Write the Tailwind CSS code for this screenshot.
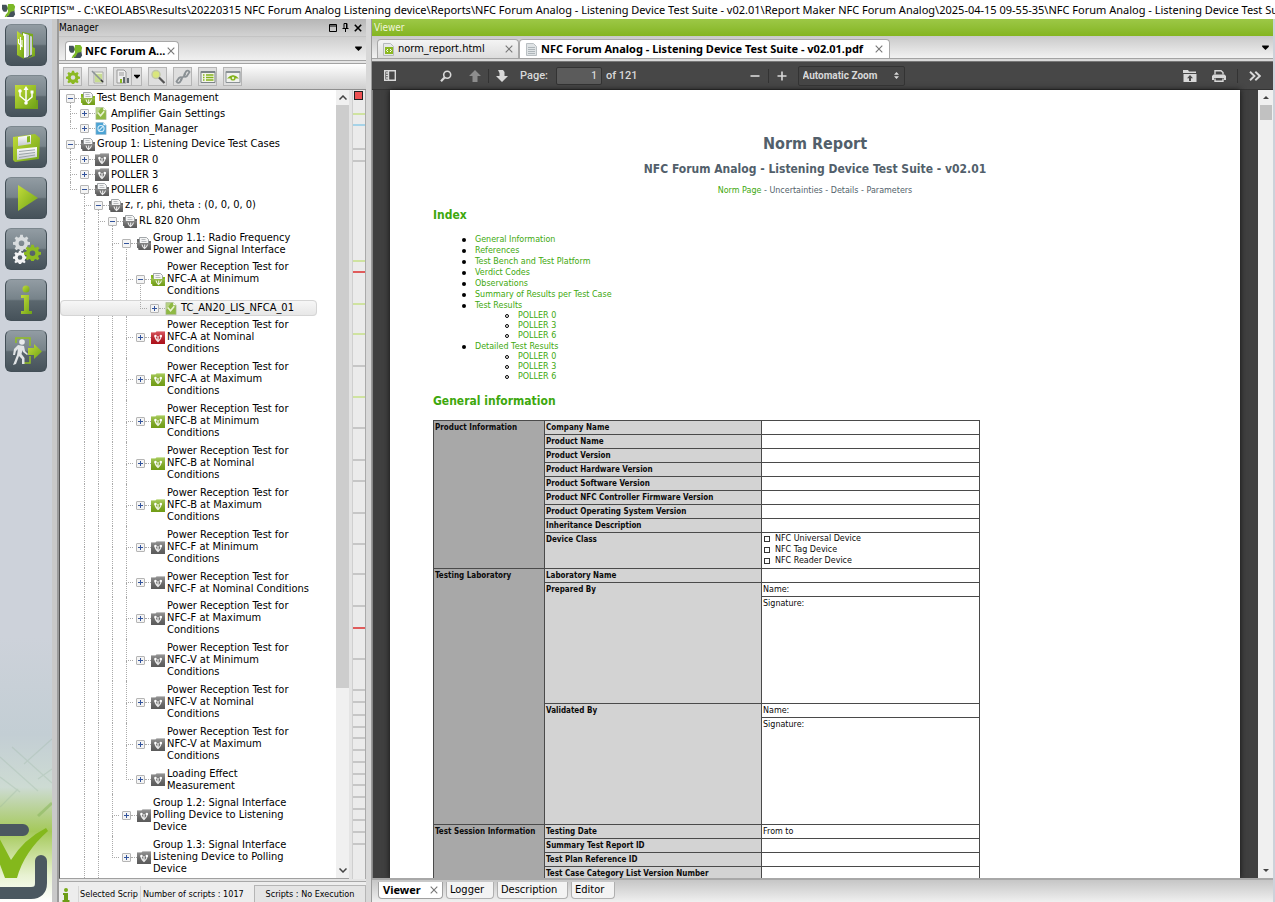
<!DOCTYPE html>
<html lang="en">

<head>
    <meta charset="UTF-8">
    <meta name="viewport" content="width=device-width, initial-scale=1.0">
    <title>SCRIPTIS</title>
    <script src="https://cdn.jsdelivr.net/npm/@tailwindcss/browser@4"></script>
</head>

<body class="h-screen flex flex-col overflow-hidden bg-[#cdd2da] text-black text-[11px] leading-3 font-['DejaVu_Sans_Condensed','DejaVu_Sans',sans-serif]">

    <!-- shared icons -->
    <svg class="absolute size-0" aria-hidden="true">
        <defs>
            <linearGradient id="lime" x1="0" y1="0" x2="1" y2="1">
                <stop offset="0" stop-color="#c3dc3a" />
                <stop offset="1" stop-color="#6fa317" />
            </linearGradient>
            <linearGradient id="silver" x1="0" y1="0" x2="0" y2="1">
                <stop offset="0" stop-color="#ffffff" />
                <stop offset="1" stop-color="#c4c9cc" />
            </linearGradient>
            <linearGradient id="shade" x1="0" y1="0" x2="0" y2="1">
                <stop offset="0" stop-color="#ffffff" stop-opacity=".3" />
                <stop offset="1" stop-color="#000000" stop-opacity=".15" />
            </linearGradient>
        </defs>
        <symbol id="logo" viewBox="0 0 16 16">
            <path d="M0 2h5l2 4-2 4H2Q0 9 0 6z" fill="#44525a" />
            <path d="M8 9l6-1 1 5-2 3H6l-1-2z" fill="#44525a" />
            <path d="M7 1h6l2 3-1 5-4 1-3 5-2-1 2-5-1-3z" fill="#7cb928" />
            <path d="M3 16l2-4 2 1-2 3z" fill="#7cb928" />
        </symbol>
        <symbol id="folder" viewBox="0 0 14 13">
            <path d="M0 1.500h4.500l1-1H14V13H0z" fill="currentColor" />
            <path d="M0 1.500h4.500l1-1H14V13H0z" fill="url(#shade)" />
            <path d="M4 4.500Q4 8 7 10.500 10 8 10.500 4.500M7 5v6" fill="none" stroke="#fff" stroke-opacity=".85" stroke-width="1.300" />
            <circle cx="4.500" cy="5" r="1.200" fill="#fff" />
            <circle cx="9.800" cy="5" r="1.200" fill="#fff" />
        </symbol>
        <symbol id="folder-open" viewBox="0 0 14 13">
            <path d="M0 2h3v9H0zM11 4h3v9h-3z" fill="currentColor" />
            <path d="M2.500 .5h7l2 2V8h-9z" fill="#f4f5f5" stroke="#8d9296" stroke-width=".8" />
            <path d="M4.500 2.500h4M4.500 4.500h5" stroke="#b2b6b9" stroke-width=".9" />
            <path d="M0 4.500l3 1.500h11v7H1.500z" fill="currentColor" />
            <path d="M0 4.500l3 1.500h11v7H1.500z" fill="url(#shade)" />
            <path d="M5 7.500Q5.500 10 7.500 11.500 10 10 10.500 7.500M7.700 7.500V12" fill="none" stroke="#fff" stroke-opacity=".85" stroke-width="1.200" />
        </symbol>
        <symbol id="script-ok" viewBox="0 0 12 14">
            <path d="M.5 .5h8l3 3v10H.5z" fill="#8fb944" stroke="#a9b79a" stroke-width=".6" />
            <path d="M8.500 .5l3 3h-3z" fill="#fff" />
            <path d="M2 .8h4L.8 9V.8z" fill="#fff" fill-opacity=".35" />
            <path d="M2.500 6l3 3.500 4-5" fill="none" stroke="#e9f3d2" stroke-width="1.700" />
        </symbol>
        <symbol id="script-none" viewBox="0 0 12 14">
            <path d="M.5 .5h8l3 3v10H.5z" fill="#4ba3d4" stroke="#9db8c8" stroke-width=".6" />
            <path d="M8.500 .5l3 3h-3z" fill="#fff" />
            <circle cx="6" cy="7" r="3.300" fill="none" stroke="#d5ecf9" stroke-width="1.200" />
            <path d="M3.500 9.500l5-5" stroke="#d5ecf9" stroke-width="1.200" />
        </symbol>
        <symbol id="gear" viewBox="0 0 20 20">
            <path d="M8.500 1h3l.5 2.600 1.900.8L16 2.800 18.100 5l-1.500 2.100.8 1.900 2.600.5v3l-2.600.5-.8 1.900 1.500 2.100-2.100 2.100-2.100-1.500-1.900.8-.5 2.600h-3l-.5-2.600-1.900-.8L4 19.100 1.900 17l1.500-2.100-.8-1.900L0 12.500v-3L2.600 9l.8-1.900L1.900 5 4 2.900l2.100 1.500L8 3.600zM10 7.500a3.300 3.300 0 1 0 0 6.600 3.300 3.300 0 0 0 0-6.600z" fill="currentColor" fill-rule="evenodd" />
        </symbol>
        <symbol id="close" viewBox="0 0 8 8">
            <path d="M.7 .7l6.600 6.600M7.300 .7L.7 7.300" fill="none" stroke="currentColor" stroke-width="1.100" />
        </symbol>
        <symbol id="down" viewBox="0 0 8 6">
            <path d="M0 .5h8v1.500L4 6 0 2z" fill="currentColor" />
        </symbol>
    </svg>

    <header class="h-[19px] shrink-0 bg-white flex items-center gap-[4px] pl-[2px] overflow-hidden">
        <svg class="size-[14px] shrink-0"><use href="#logo" /></svg>
        <h1 class="font-['Noto_Sans',sans-serif] whitespace-nowrap leading-[18px]">SCRIPTIS™ - C:\KEOLABS\Results\20220315 NFC Forum Analog Listening device\Reports\NFC Forum Analog - Listening Device Test Suite - v02.01\Report Maker NFC Forum Analog\2025-04-15 09-55-35\NFC Forum Analog - Listening Device Test Sui</h1>
    </header>

    <div class="flex-1 min-h-0 flex">

        <!-- launcher -->
        <nav class="w-[52px] shrink-0 relative overflow-hidden flex flex-col items-center gap-[9px] pt-[5px] bg-[linear-gradient(#cdd2da_0%,#cdd2da_70%,#c3ced4_81%,#cddbd3_87%,#a5c95a_92%,#e8f2d2_97%,#ffffff_100%)]">
            <button aria-label="Open project" class="size-[42px] shrink-0 rounded-md border border-[#434f57] border-t-[#7c878e] bg-[linear-gradient(#929ca3_0%,#77838a_48%,#5b676e_52%,#46525a_100%)] flex items-center justify-center">
                <svg class="size-8" viewBox="0 0 32 32">
                    <path d="M12 3l11 2v20l-11 4z" fill="#7aa91c" />
                    <path d="M13 4l5 2v22l-5 1z" fill="#fff" />
                    <path d="M16 5l3 1v21l-3 1zM20 7l2 .5v18l-2 1z" fill="#c9ced1" />
                    <path d="M22 8v10l3 1v8l-9 3 6-3z" fill="url(#lime)" />
                    <path d="M7 2l7 5v23l-7-4z" fill="url(#lime)" />
                    <path d="M8.500 10v4l4 4M12 11v6M10.500 8v13" fill="none" stroke="#fff" stroke-width="1.100" />
                </svg>
            </button>
            <button aria-label="Devices" class="size-[42px] shrink-0 rounded-md border border-[#434f57] border-t-[#7c878e] bg-[linear-gradient(#929ca3_0%,#77838a_48%,#5b676e_52%,#46525a_100%)] flex items-center justify-center">
                <svg class="size-8" viewBox="0 0 32 32">
                    <path d="M5 6h21v14h2v9H5z" fill="#74a21b" />
                    <path d="M5 5h21v23H5z" fill="url(#lime)" />
                    <path d="M10 11v5l6 5M22 12v5l-6 5M16 9v13" fill="none" stroke="#fff" stroke-width="1.500" />
                    <path d="M16 6l2.500 4h-5z" fill="#fff" />
                    <circle cx="10" cy="11" r="1.800" fill="#fff" />
                    <circle cx="16" cy="23" r="1.800" fill="#fff" />
                    <path d="M20.500 10.500h3v3h-3z" fill="#fff" />
                </svg>
            </button>
            <button aria-label="Save" class="size-[42px] shrink-0 rounded-md border border-[#434f57] border-t-[#7c878e] bg-[linear-gradient(#929ca3_0%,#77838a_48%,#5b676e_52%,#46525a_100%)] flex items-center justify-center">
                <svg class="size-8" viewBox="0 0 32 32">
                    <path d="M3 6l22-3 5 4-1 21-24 3-2-2z" fill="url(#lime)" />
                    <path d="M8 6l13-2v9L8 15z" fill="url(#silver)" />
                    <path d="M17 5.500l3-.5v6l-3 .5z" fill="#84b520" />
                    <path d="M7 18l20-2v10L7 29z" fill="url(#silver)" />
                    <path d="M9 20.500l16-1.700M9 23.500l16-2M9 26.500l16-2.500" stroke="#9aa3a8" />
                </svg>
            </button>
            <button aria-label="Run" class="size-[42px] shrink-0 rounded-md border border-[#434f57] border-t-[#7c878e] bg-[linear-gradient(#929ca3_0%,#77838a_48%,#5b676e_52%,#46525a_100%)] flex items-center justify-center">
                <svg class="size-8" viewBox="0 0 32 32">
                    <path d="M8 3l20 13L8 29z" fill="url(#lime)" />
                </svg>
            </button>
            <button aria-label="Settings" class="size-[42px] shrink-0 rounded-md border border-[#434f57] border-t-[#7c878e] bg-[linear-gradient(#929ca3_0%,#77838a_48%,#5b676e_52%,#46525a_100%)] flex items-center justify-center">
                <svg class="size-8" viewBox="0 0 32 32">
                    <use href="#gear" x="3" y="1" width="17" height="17" class="text-[#d8dcde]" />
                    <use href="#gear" x="3" y="17" width="14" height="14" class="text-[#f2f3f4]" />
                    <use href="#gear" x="14" y="11" width="17" height="17" class="text-[#8dbb22]" />
                </svg>
            </button>
            <button aria-label="Information" class="size-[42px] shrink-0 rounded-md border border-[#434f57] border-t-[#7c878e] bg-[linear-gradient(#929ca3_0%,#77838a_48%,#5b676e_52%,#46525a_100%)] flex items-center justify-center">
                <svg class="size-8" viewBox="0 0 32 32">
                    <circle cx="16" cy="5" r="3.500" fill="url(#lime)" />
                    <path d="M11 11h8v16h3v3H11v-3h3V14h-3z" fill="url(#lime)" />
                </svg>
            </button>
            <button aria-label="Exit" class="size-[42px] shrink-0 rounded-md border border-[#434f57] border-t-[#7c878e] bg-[linear-gradient(#929ca3_0%,#77838a_48%,#5b676e_52%,#46525a_100%)] flex items-center justify-center">
                <svg class="size-8" viewBox="0 0 32 32">
                    <path d="M6 8V3h14v8M20 21v7h-6" fill="none" stroke="#93c023" stroke-width="1.500" />
                    <path d="M18 13h6V9l8 7.500-8 7.500v-4h-6z" fill="url(#lime)" />
                    <circle cx="12" cy="7" r="2.800" fill="#e8eaeb" />
                    <path d="M8 10l6 1 1 5 3 3-1 1-4-3-.5-2-1 4 3 4v6h-2.500v-5L9 21l-3 8-3 1 4-10 1-6-2 2-1 4H3l1-6z" fill="#e1e4e6" />
                </svg>
            </button>
            <svg class="absolute bottom-0 left-0 w-[52px] h-[185px]" viewBox="0 0 52 185">
                <path d="M12 30l40 36M0 40l38 34M52 52L38 62M52 22L24 47M18 72L0 90M0 60l20 15" fill="none" stroke="#8fae96" stroke-opacity=".25" stroke-width="1.200" />
                <path d="M52 86L38 99" stroke="#8cb860" stroke-opacity=".6" stroke-width="3" />
                <path d="M-10 113h33M41 144v22q0 10-10 10H-10" fill="none" stroke="#4b5860" stroke-width="12" stroke-linecap="round" />
                <path d="M-8 126l5-9 14 26Q24 122 46 111l2 3Q24 135 17 161H5z" fill="#84b81c" />
            </svg>
        </nav>
        <div class="w-[7px] shrink-0 bg-[#c9c9c9] border-r-2 border-[#9b9b9b]"></div>

        <!-- manager -->
        <section class="w-[307px] shrink-0 flex flex-col bg-[#e4e4e4]">
            <div class="h-[17px] shrink-0 flex items-center gap-[5px] pr-1 bg-linear-to-b from-[#b6b6b6] to-[#d2d2d2]">
                <h2 class="flex-1 text-[10px]">Manager</h2>
                <button aria-label="Maximize"><svg class="size-2" viewBox="0 0 8 8"><path d="M.5 .5h7v7h-7zM0 2h8" fill="none" stroke="#000" /></svg></button>
                <button aria-label="Pin"><svg class="w-[7px] h-[9px]" viewBox="0 0 7 9"><path d="M2 .5h3v5H2zM4.500 0v6M.5 5.500h6M3.500 6v3" fill="none" stroke="#000" /></svg></button>
                <button aria-label="Close manager"><svg class="size-2" viewBox="0 0 8 8"><path d="M.8 .8l6.400 6.400M7.200 .8L.8 7.200" stroke="#000" stroke-width="1.600" /></svg></button>
            </div>
            <div class="h-[25px] shrink-0 flex items-end justify-between pl-[6px] pr-1 border-t border-b border-t-[#c4c4c4] border-b-[#a3a3a3] bg-linear-to-b from-[#cfcfcf] to-[#f0f0f0]">
                <div class="h-[19px] flex items-center gap-[2px] px-[3px] bg-white border border-b-0 border-[#a8a8a8] rounded-t-sm">
                    <svg class="size-[14px]"><use href="#logo" /></svg>
                    <button class="font-bold text-[11px] font-['Noto_Sans',sans-serif]">NFC Forum A...</button>
                    <button aria-label="Close tab" class="text-[#777]"><svg class="size-2"><use href="#close" /></svg></button>
                </div>
                <button aria-label="Tab list" class="self-center"><svg class="w-[7px] h-[5px]"><use href="#down" /></svg></button>
            </div>
            <div class="h-[26px] shrink-0 mt-[2px] flex items-center gap-[6px] pl-1 border-t border-[#a3a3a3] bg-linear-to-b from-white to-[#cfcfcf]">
                <button aria-label="Options" class="size-[19px] border border-[#b5b5b5] bg-[#dedede] flex items-center justify-center text-[#8cb923]"><svg class="size-[14px]"><use href="#gear" /></svg></button>
                <button aria-label="Edit" class="size-[19px] border border-[#b5b5b5] bg-[#dedede] flex items-center justify-center">
                    <svg class="size-4" viewBox="0 0 16 16"><path d="M4 3h9v11H4z" fill="#e9f0d4" stroke="#aaa" /><path d="M5 6h7M5 8h7M5 10h7M5 12h7" stroke="#a6c94f" /><path d="M2 2l10 10" stroke="#8b9297" stroke-width="1.600" /><path d="M11 11l2 2" stroke="#333" stroke-width="1.600" /></svg>
                </button>
                <div class="flex">
                    <button aria-label="Reports" class="size-[19px] border border-[#b5b5b5] bg-[#dedede] flex items-center justify-center">
                        <svg class="size-4" viewBox="0 0 16 16"><path d="M2 1h7l2 2v11H2z" fill="#eee" stroke="#999" /><path d="M4 4h5M4 6h5" stroke="#999" /><path d="M5 14v-4h2v4z" fill="#8cb923" /><path d="M8 14V8h2v6zM12 14V9h2v5z" fill="#60686d" /></svg>
                    </button>
                    <button aria-label="Report menu" class="w-[10px] h-[19px] border border-l-0 border-[#b5b5b5] bg-[#dedede] flex items-center justify-center"><svg class="w-[6px] h-[5px]"><use href="#down" /></svg></button>
                </div>
                <button aria-label="Search" class="size-[19px] border border-[#b5b5b5] bg-[#dedede] flex items-center justify-center">
                    <svg class="size-4" viewBox="0 0 16 16"><circle cx="6" cy="5.500" r="4" fill="#d9e67c" stroke="#c0c7a8" stroke-width="1.500" /><path d="M9 8.500l5.500 5.500" stroke="#555" stroke-width="2.200" /></svg>
                </button>
                <button aria-label="Link" class="size-[19px] border border-[#b5b5b5] bg-[#dedede] flex items-center justify-center">
                    <svg class="size-4" viewBox="0 0 16 16" fill="none" stroke="#8a9094" stroke-width="1.800"><path d="M7 10L5 13Q3 15 1.500 12.500L4 9Q6 7.500 7.500 9" /><path d="M9 6l2-3.500Q13 .5 14.500 3L12 7Q10 8.500 8.500 7" /><path d="M5.500 11l5-6" /></svg>
                </button>
                <button aria-label="List" class="size-[19px] border border-[#b5b5b5] bg-[#dedede] flex items-center justify-center">
                    <svg class="size-4" viewBox="0 0 16 16"><path d="M1 2.500h14v11H1z" fill="#f4f6ea" stroke="#7b8387" /><path d="M1 3h14" stroke="#7b8387" stroke-width="2" /><path d="M3 6h1.500M6 6h7.500M3 8.500h1.500M6 8.500h7.500M3 11h1.500M6 11h7.500" stroke="#84b31c" stroke-width="1.500" /></svg>
                </button>
                <button aria-label="Preview" class="size-[19px] border border-[#b5b5b5] bg-[#dedede] flex items-center justify-center">
                    <svg class="size-4" viewBox="0 0 16 16"><path d="M1 2.500h14v11H1z" fill="#f1f2ee" stroke="#8b9296" /><path d="M1 3h14" stroke="#8b9296" stroke-width="2" /><path d="M2 9.500Q8 3 14 9.500 8 9 2 9.500z" fill="#84b31c" /><circle cx="8" cy="9" r="2.600" fill="#84b31c" /><circle cx="8" cy="9" r="1.200" fill="#e8f2d0" /></svg>
                </button>
            </div>

            <div class="flex-1 min-h-0 flex border-t border-[#8f8f8f] pb-[2px]">
                <div class="flex-1 min-w-0 flex bg-white border-l border-[#555] border-b border-b-[#a0a0a0]">
                    <div id="tree" class="flex-1 min-w-0 overflow-hidden"></div>
                    <div class="w-[13px] shrink-0 flex flex-col items-center justify-between bg-[#f0f0f0]">
                        <button aria-label="Scroll up" class="h-[15px]"><svg class="w-2 h-[5px]" viewBox="0 0 8 5"><path d="M.5 4.500L4 1l3.500 3.500" fill="none" stroke="#444" stroke-width="1.500" /></svg></button>
                        <div class="w-full flex-1 bg-[#cdcdcd]"></div>
                        <div class="w-full basis-[174px]"></div>
                        <button aria-label="Scroll down" class="h-[16px]"><svg class="w-2 h-[5px]" viewBox="0 0 8 5"><path d="M.5 .5L4 4 7.500 .5" fill="none" stroke="#444" stroke-width="1.500" /></svg></button>
                    </div>
                </div>
                <div id="marks" class="w-[13px] ml-[3px] shrink-0 relative bg-[#ebebeb] border-l border-[#cfcfcf]">
                    <div class="absolute top-[1px] left-[1px] size-[9px] bg-[#ee5253] border border-[#222]"></div>
                </div>
                <div class="w-[1px] shrink-0 bg-[#aaa]"></div>
            </div>

            <footer class="h-[21px] shrink-0 flex items-end bg-[#ededed] border-t border-[#a8a8a8] text-[9px] leading-[16px] whitespace-nowrap">
                <svg class="w-2 h-[14px] ml-[3px] mr-2" viewBox="0 0 8 14"><circle cx="4" cy="2" r="2" fill="#79ab1a" /><path d="M1 5h5v7h1.500v2h-7v-2H2V7H1z" fill="#6c9c17" /></svg>
                <div class="w-[62px] pl-px border-l border-[#d6d6d6]">Selected Scrip</div>
                <div class="w-[114px] pl-[2px] border-l border-[#d6d6d6]">Number of scripts : 1017</div>
                <div class="flex-1 h-[17px] text-center bg-[#e4e4e4] border border-b-0 border-[#b5b5b5]">Scripts : No Execution</div>
            </footer>
        </section>
        <div class="w-[6px] shrink-0 bg-[#d8d8d8] border-r border-[#9b9b9b]"></div>

        <!-- viewer -->
        <section class="flex-1 min-w-0 flex flex-col bg-[#d9d9d9] mr-[2px]">
            <div class="h-[17px] shrink-0 flex items-center bg-linear-to-b from-[#9dc846] to-[#84b51f]">
                <h2 class="pl-[2px] text-[10px] text-[#f0f5dc]">Viewer</h2>
            </div>
            <div class="h-[23px] shrink-0 flex items-end pl-[5px] pr-1 border-b border-[#a3a3a3] bg-linear-to-b from-[#c9c9c9] to-[#f2f2f2]">
                <div class="w-[142px] h-[19px] flex items-center gap-[4px] px-[5px] bg-linear-to-b from-[#f4f4f4] to-[#dddddd] border border-b-0 border-[#a8a8a8] rounded-t-sm">
                    <svg class="w-[11px] h-[13px]" viewBox="0 0 11 13"><path d="M.5 .5h7l3 3v9H.5z" fill="#e6e8e8" stroke="#b5b9bb" /><path d="M2 4h8v7H2z" fill="#8cb923" /><path d="M5 6L3.500 7.500 5 9M7 6l1.500 1.500L7 9" fill="none" stroke="#fff" /></svg>
                    <button class="flex-1 text-left">norm_report.html</button>
                    <button aria-label="Close norm_report.html" class="text-[#777]"><svg class="size-2"><use href="#close" /></svg></button>
                </div>
                <div class="h-[19px] flex items-center gap-[4px] px-[6px] bg-white border border-b-0 border-[#a8a8a8] rounded-t-sm">
                    <svg class="w-[11px] h-[13px]" viewBox="0 0 11 13"><path d="M.5 .5h7l3 3v9H.5z" fill="#dfe3e5" stroke="#b9bfc2" /><path d="M2 4.500h7M2 6.500h7M2 8.500h7M2 10.500h7" stroke="#aeb6ba" /></svg>
                    <button class="font-bold font-['Noto_Sans',sans-serif] whitespace-nowrap mr-2">NFC Forum Analog - Listening Device Test Suite - v02.01.pdf</button>
                    <button aria-label="Close pdf" class="text-[#777]"><svg class="size-2"><use href="#close" /></svg></button>
                </div>
                <button aria-label="Tab list" class="self-center ml-auto"><svg class="w-[7px] h-[5px]"><use href="#down" /></svg></button>
            </div>

            <div class="h-[29px] shrink-0 mt-[2px] flex items-center px-3 bg-[#474747] border-t border-[#777] border-b border-b-[#333] text-[#d9d9d9] font-['Roboto',sans-serif] text-[10px] font-medium">
                <button aria-label="Toggle sidebar"><svg class="w-3 h-[11px]" viewBox="0 0 12 11"><path d="M.7 .7h10.600v9.600H.7zM4.500 1v9M2 3h2M2 5.500h2M2 8h2" fill="none" stroke="currentColor" stroke-width="1.400" /></svg></button>
                <button aria-label="Find" class="ml-11"><svg class="size-3" viewBox="0 0 12 12"><circle cx="7.200" cy="4.700" r="3.500" fill="none" stroke="currentColor" stroke-width="1.600" /><path d="M4.800 7.300L1 11.200" stroke="currentColor" stroke-width="2.200" /></svg></button>
                <button aria-label="Previous page" class="ml-[17px] text-[#8d8d8d]"><svg class="size-3" viewBox="0 0 12 12"><path d="M6 0l6 6H8.500v6h-5V6H0z" fill="currentColor" /></svg></button>
                <div class="w-px h-[14px] mx-[7px] bg-[#333]"></div>
                <button aria-label="Next page"><svg class="size-3" viewBox="0 0 12 12"><path d="M2 0h5l1.500 2v4H12l-6 6-6-6h3.500V3z" fill="currentColor" /></svg></button>
                <label for="page" class="ml-3 text-[11px]">Page:</label>
                <input id="page" type="text" value="1" class="w-[46px] h-[18px] ml-2 px-1 text-right bg-[#5b5b5b] border border-[#333] rounded-xs">
                <span class="ml-1 text-[11px]">of 121</span>
                <button aria-label="Zoom out" class="ml-28"><svg class="w-[10px] h-[10px]" viewBox="0 0 10 10"><path d="M.5 5h9" stroke="currentColor" stroke-width="1.600" /></svg></button>
                <div class="w-px h-[14px] mx-2 bg-[#333]"></div>
                <button aria-label="Zoom in"><svg class="w-[10px] h-[10px]" viewBox="0 0 10 10"><path d="M.5 5h9M5 .5v9" stroke="currentColor" stroke-width="1.600" /></svg></button>
                <div class="relative ml-[11px] flex items-center">
                    <select aria-label="Zoom" class="w-[107px] h-[20px] pl-1 appearance-none bg-[#454545] border border-[#333] rounded-xs font-bold">
                        <option>Automatic Zoom</option>
                    </select>
                    <svg class="absolute right-[6px] w-[5px] h-[7px] pointer-events-none" viewBox="0 0 5 7"><path d="M2.500 0L5 2.700H0zM0 4.300h5L2.500 7z" fill="currentColor" /></svg>
                </div>
                <button aria-label="Open file" class="ml-auto"><svg class="w-[14px] h-3" viewBox="0 0 14 12"><path d="M0 0h5l1 1.500h7V3H0z" fill="currentColor" /><path d="M.5 4h13v8H.5zM7 5L4 8.200h2V11h2V8.200h2z" fill="currentColor" fill-rule="evenodd" /></svg></button>
                <button aria-label="Print" class="ml-[15px]"><svg class="w-[14px] h-3" viewBox="0 0 14 12"><path d="M3 4.500V.7h6l2 1.800v2M3 8.500v2.800h8V8.500" fill="none" stroke="currentColor" stroke-width="1.400" /><path d="M1.500 4.500h11L14 6v4h-2V8H2v2H0V6z" fill="currentColor" /></svg></button>
                <div class="w-px h-[14px] mx-[11px] bg-[#333]"></div>
                <button aria-label="Tools"><svg class="w-3 h-[10px]" viewBox="0 0 12 10"><path d="M1 .7L5.500 5 1 9.300M6.300 .7L10.800 5 6.300 9.300" fill="none" stroke="currentColor" stroke-width="1.900" /></svg></button>
            </div>

            <div class="flex-1 min-h-0 flex bg-[#404040] border-l border-[#888]">
                <div class="flex-1 min-w-0 ml-[17px] mr-[18px] overflow-hidden bg-white shadow-[0_0_6px_#111] pt-[44px] px-[43px] text-[#0a0a0a] font-['DejaVu_Sans',sans-serif] text-[8px]">
                    <div class="text-center text-[#525f6b]">
                        <h1 class="text-[16px] leading-[20px] font-bold font-['DejaVu_Sans_Condensed','DejaVu_Sans',sans-serif]">Norm Report</h1>
                        <h2 class="mt-2 text-[12px] leading-[14px] font-bold font-['DejaVu_Sans_Condensed','DejaVu_Sans',sans-serif]">NFC Forum Analog - Listening Device Test Suite - v02.01</h2>
                        <p class="mt-2 leading-[14px]"><a href="#" class="text-[#3ea80d]">Norm Page</a> - <a href="#">Uncertainties</a> - <a href="#">Details</a> - <a href="#">Parameters</a></p>
                    </div>
                    <h2 class="mt-[9px] text-[12px] leading-[16px] font-bold text-[#3ea80d] font-['DejaVu_Sans_Condensed','DejaVu_Sans',sans-serif]">Index</h2>
                    <ul id="index" class="mt-[11px] pl-[42px] leading-[11px]"></ul>
                    <h2 class="mt-[11px] text-[12px] leading-[16px] font-bold text-[#3ea80d] font-['DejaVu_Sans_Condensed','DejaVu_Sans',sans-serif]">General information</h2>
                    <table class="w-[546px] mt-[11px] table-fixed border-collapse leading-[13px] [&_th]:text-left [&_th]:align-top [&_td]:align-top [&_th]:px-px [&_td]:px-px [&_th]:border [&_td]:border [&_th]:border-[#4a4a4a] [&_td]:border-[#4a4a4a] font-['DejaVu_Sans_Condensed','DejaVu_Sans',sans-serif]">
                        <colgroup>
                            <col class="w-[111px]">
                            <col class="w-[217px]">
                            <col class="w-[218px]">
                        </colgroup>
                        <tbody id="info"></tbody>
                    </table>
                </div>
                <div class="w-[15px] shrink-0 flex flex-col items-center bg-[#f0f0f0]">
                    <button aria-label="Page up" class="h-[15px]"><svg class="w-[6px] h-[3px]" viewBox="0 0 6 3"><path d="M0 3l3-3 3 3z" fill="#444" /></svg></button>
                    <div class="w-3 h-[15px] bg-[#c1c1c1]"></div>
                    <button aria-label="Page down" class="h-[15px] mt-auto"><svg class="w-[6px] h-[3px]" viewBox="0 0 6 3"><path d="M0 0h6L3 3z" fill="#444" /></svg></button>
                </div>
            </div>

            <div class="h-6 shrink-0 flex items-start gap-[3px] pt-[2px] pl-[6px] border-t-2 border-[#a8a8a8] bg-linear-to-b from-[#c6c6c6] to-[#f0f0f0]">
                <div class="w-[65px] h-[17px] flex items-center justify-between px-[4px] bg-white border border-t-0 border-[#a0a0a0] rounded-b-sm">
                    <button class="font-bold font-['Noto_Sans',sans-serif]">Viewer</button>
                    <button aria-label="Close viewer" class="text-[#777]"><svg class="size-2"><use href="#close" /></svg></button>
                </div>
                <button class="w-[48px] h-[17px] pl-[3px] text-left bg-[#f3f3f3] border border-t-0 border-[#b0b0b0] rounded-b-sm">Logger</button>
                <button class="w-[71px] h-[17px] pl-[3px] text-left bg-[#f3f3f3] border border-t-0 border-[#b0b0b0] rounded-b-sm">Description</button>
                <button class="w-[44px] h-[17px] pl-[3px] text-left bg-[#f3f3f3] border border-t-0 border-[#b0b0b0] rounded-b-sm">Editor</button>
            </div>
        </section>
    </div>

    <script>
        const grey = "text-[#6b6b6b]"
        const green = "text-[#86b91a]"
        const red = "text-[#cc1420]"

        // guides: one char per ancestor column
        // "." empty, "|" line going on, "+" branch, "L" last branch
        const rows = [
            ["", "-", "folder-open", green, "Test Bench Management"],
            ["+", "+", "script-ok", "", "Amplifier Gain Settings"],
            ["L", "+", "script-none", "", "Position_Manager"],
            ["", "-", "folder-open", grey, "Group 1: Listening Device Test Cases"],
            ["+", "+", "folder", grey, "POLLER 0"],
            ["+", "+", "folder", grey, "POLLER 3"],
            ["L", "-", "folder-open", grey, "POLLER 6"],
            [".+", "-", "folder-open", grey, "z, r, phi, theta : (0, 0, 0, 0)"],
            [".|+", "-", "folder-open", grey, "RL 820 Ohm"],
            [".||+", "-", "folder-open", grey, "Group 1.1: Radio Frequency<br>Power and Signal Interface"],
            [".|||+", "-", "folder-open", green, "Power Reception Test for<br>NFC-A at Minimum<br>Conditions"],
            [".....L", "+", "script-ok", "", "TC_AN20_LIS_NFCA_01"],
            [".|||+", "+", "folder", red, "Power Reception Test for<br>NFC-A at Nominal<br>Conditions"],
            [".|||+", "+", "folder", green, "Power Reception Test for<br>NFC-A at Maximum<br>Conditions"],
            [".|||+", "+", "folder", green, "Power Reception Test for<br>NFC-B at Minimum<br>Conditions"],
            [".|||+", "+", "folder", green, "Power Reception Test for<br>NFC-B at Nominal<br>Conditions"],
            [".|||+", "+", "folder", green, "Power Reception Test for<br>NFC-B at Maximum<br>Conditions"],
            [".|||+", "+", "folder", grey, "Power Reception Test for<br>NFC-F at Minimum<br>Conditions"],
            [".|||+", "+", "folder", grey, "Power Reception Test for<br>NFC-F at Nominal Conditions"],
            [".|||+", "+", "folder", grey, "Power Reception Test for<br>NFC-F at Maximum<br>Conditions"],
            [".|||+", "+", "folder", grey, "Power Reception Test for<br>NFC-V at Minimum<br>Conditions"],
            [".|||+", "+", "folder", grey, "Power Reception Test for<br>NFC-V at Nominal<br>Conditions"],
            [".|||+", "+", "folder", grey, "Power Reception Test for<br>NFC-V at Maximum<br>Conditions"],
            [".|||L", "+", "folder", grey, "Loading Effect<br>Measurement"],
            [".||+", "+", "folder", grey, "Group 1.2: Signal Interface<br>Polling Device to Listening<br>Device"],
            [".||L", "+", "folder", grey, "Group 1.3: Signal Interface<br>Listening Device to Polling<br>Device"],
            [".|+", "+", "folder", grey, ""],
        ]

        const guide = (c) => {
            if (c === ".") return `<div class="w-[14px] shrink-0"></div>`
            let top = c === "|" ? "" : "border-b"
            let bottom = c === "L" ? "" : "border-l"
            return `<div class="w-[14px] shrink-0 pl-[7px] flex flex-col">
                <div class="flex-1 border-l border-dotted border-[#aaa] ${top}"></div>
                <div class="flex-1 border-dotted border-[#aaa] ${bottom}"></div>
            </div>`
        }

        let tree = document.getElementById("tree")
        rows.forEach(([guides, sign, icon, color, text]) => {
            let lines = text.split("<br>").length
            let height = "h-4"
            if (guides.length === 1) height = "h-[15px]"
            if (lines === 2) height = "h-[29px]"
            if (lines === 3) height = "h-[42px]"
            let script = icon.startsWith("script")
            let picked = text.startsWith("TC_")
            let look = picked ? "w-[257px] rounded-sm bg-linear-to-b from-[#f8f8f8] to-[#e6e6e6] outline -outline-offset-1 outline-[#d5d5d5]" : ""
            tree.innerHTML += `
            <div class="flex pl-[3px] ${height} ${look}">
                ${[...guides].map(guide).join("")}
                <div class="w-[18px] shrink-0 flex items-center relative pl-[3px]">
                    ${sign === "-" ? `<div class="absolute left-[7px] top-1/2 bottom-0 border-l border-dotted border-[#aaa]"></div>` : ""}
                    <button aria-label="Toggle" class="relative size-[9px] shrink-0 border border-[#b5b5b5] rounded-[1px] bg-[#f4f4f4] text-[#33549c]">
                        <svg class="size-[7px]" viewBox="0 0 7 7"><path d="${sign === "-" ? "M1 3.500h5" : "M1 3.500h5M3.500 1v5"}" stroke="currentColor" /></svg>
                    </button>
                    <div class="flex-1 border-t border-dotted border-[#aaa]"></div>
                </div>
                <svg class="self-center shrink-0 ${script ? "w-[12px] h-[13px] mr-[4px]" : "w-[14px] h-[13px] mr-[2px]"} ${color}"><use href="#${icon}" /></svg>
                <div class="self-center whitespace-nowrap">${text}</div>
            </div>`
        })

        // positions of the result marks along the ruler
        const marks = {
            "bg-[#cfe3a0]": [24, 171, 214, 244, 307],
            "bg-[#a6d3e8]": [35],
            "bg-[#e05c5c]": [182, 538],
            "bg-[#c6c6c6]": [59, 71, 276, 338, 370, 391, 423, 454, 484, 516, 569, 600, 612, 625, 637, 648, 660, 672, 684, 695, 707, 719, 730, 742, 754],
        }
        Object.entries(marks).forEach(([color, list]) => {
            list.forEach((y) => {
                document.getElementById("marks").innerHTML += `<div class="absolute inset-x-0 h-[2px] ${color}" style="top:${y - 1}px"></div>`
            })
        })

        const pollers = ["POLLER 0", "POLLER 3", "POLLER 6"]
        const index = [
            ["General Information"], ["References"], ["Test Bench and Test Platform"], ["Verdict Codes"], ["Observations"],
            ["Summary of Results per Test Case"], ["Test Results", pollers], ["Detailed Test Results", pollers],
        ]
        document.getElementById("index").innerHTML = index.map(([name, sub]) => `
            <li class="relative before:absolute before:-left-[13px] before:top-1 before:size-[4px] before:rounded-full before:bg-black"><a href="#" class="text-[#3ea80d]">${name}</a>
                ${sub ? `<ul class="pl-[43px] leading-[10px]">${sub.map(s => `<li class="relative before:absolute before:-left-[13px] before:top-[3px] before:size-[4px] before:rounded-full before:border before:border-black"><a href="#" class="text-[#3ea80d]">${s}</a></li>`).join("")}</ul>` : ""}
            </li>`).join("")

        const box = (id, name) => `<label for="${id}" class="flex items-center gap-[5px] pl-px h-[11px] font-['DejaVu_Sans',sans-serif]"><input id="${id}" type="checkbox" class="appearance-none size-[6px] border border-[#333]">${name}</label>`
        const classes = box("universal", "NFC Universal Device") + box("tag", "NFC Tag Device") + box("reader", "NFC Reader Device")

        const info = [
            ["Product Information", [
                ["Company Name"], ["Product Name"], ["Product Version"], ["Product Hardware Version"], ["Product Software Version"],
                ["Product NFC Controller Firmware Version"], ["Product Operating System Version"], ["Inheritance Description"],
                ["Device Class", classes, "h-[36px]"],
            ]],
            ["Testing Laboratory", [
                ["Laboratory Name"],
                ["Prepared By", "Name:", "h-[14px]", "Signature:"],
                ["Validated By", "Name:", "h-[14px]", "Signature:"],
            ]],
            ["Test Session Information", [
                ["Testing Date", "From to"], ["Summary Test Report ID"], ["Test Plan Reference ID"], ["Test Case Category List Version Number"],
            ]],
        ]
        let html = ""
        info.forEach(([group, items]) => {
            let span = items.length + items.filter(i => i[3]).length
            items.forEach(([name, value = "", height = "h-[14px]", extra], n) => {
                html += `<tr class="${height}">
                    ${n === 0 ? `<th rowspan="${span}" class="bg-[#a8a8a8] whitespace-nowrap">${group}</th>` : ""}
                    <th ${extra ? `rowspan="2"` : ""} class="bg-[#d3d3d3]">${name}</th>
                    <td class="font-['DejaVu_Sans',sans-serif]">${value}</td>
                </tr>`
                if (extra) html += `<tr class="h-[107px]"><td class="font-['DejaVu_Sans',sans-serif]">${extra}</td></tr>`
            })
        })
        document.getElementById("info").innerHTML = html
    </script>
</body>

</html>
